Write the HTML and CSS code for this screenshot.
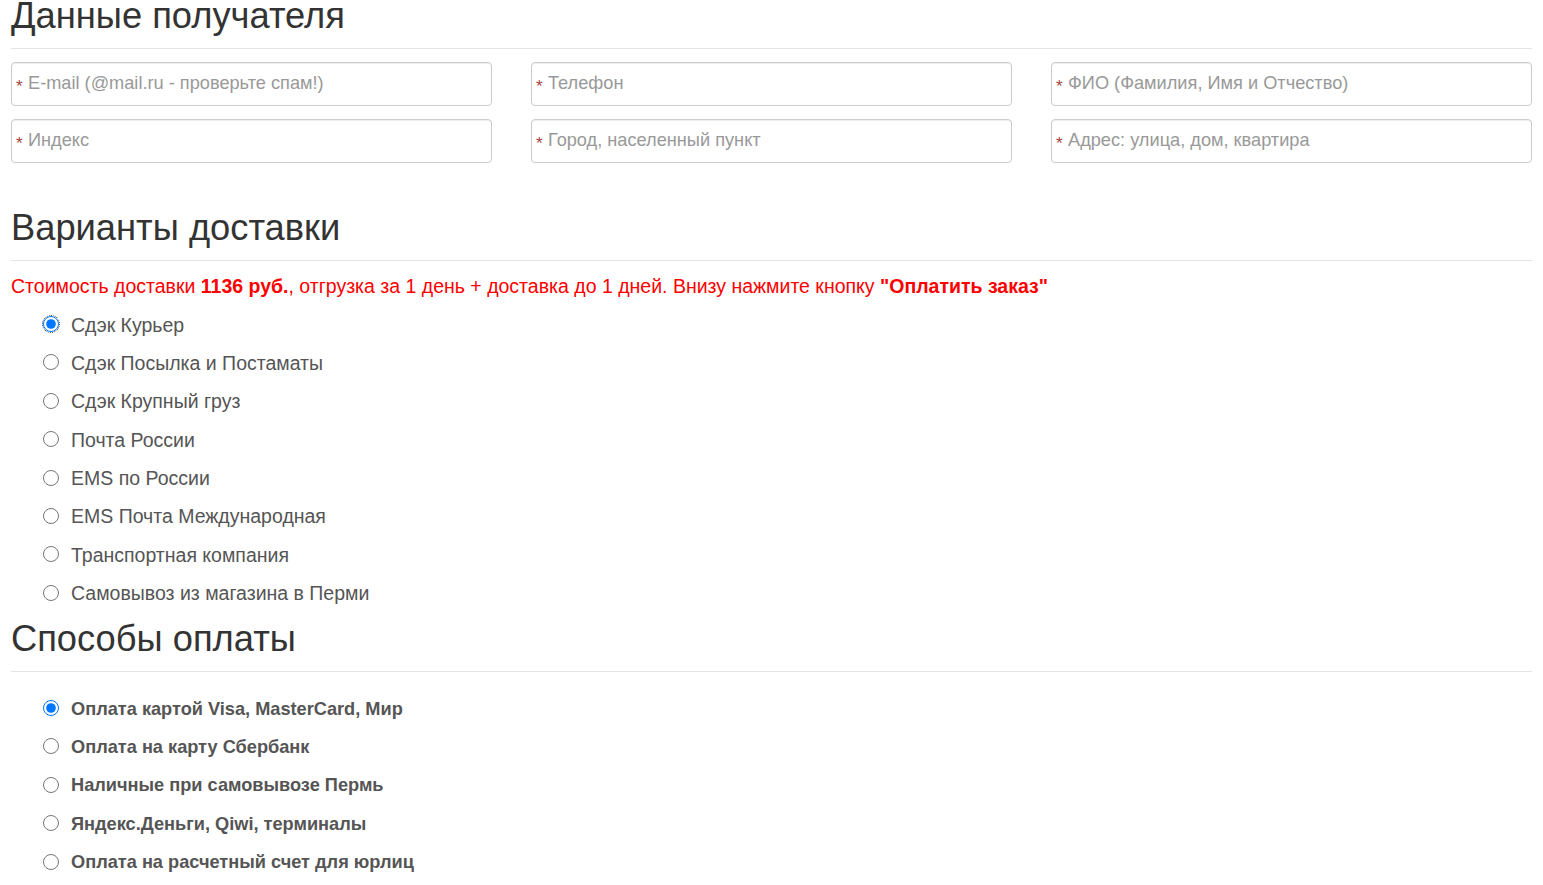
FILE: index.html
```html
<!DOCTYPE html>
<html lang="ru">
<head>
  <meta charset="UTF-8">
  <title>Оформление заказа</title>
  <link rel="stylesheet" href="styles.css">
</head>
<body>
<div class="container">
  <div class="page-header first">
    <h1>Данные получателя</h1>
  </div>
  <div class="fields">
    <div class="field"><span class="req">*</span><input type="text" placeholder="E-mail (@mail.ru - проверьте спам!)"></div>
    <div class="field"><span class="req">*</span><input type="text" placeholder="Телефон"></div>
    <div class="field"><span class="req">*</span><input type="text" placeholder="ФИО (Фамилия, Имя и Отчество)"></div>
    <div class="field"><span class="req">*</span><input type="text" placeholder="Индекс"></div>
    <div class="field"><span class="req">*</span><input type="text" placeholder="Город, населенный пункт"></div>
    <div class="field"><span class="req">*</span><input type="text" placeholder="Адрес: улица, дом, квартира"></div>
  </div>

  <div class="page-header delivery">
    <h1>Варианты доставки</h1>
  </div>
  <p class="notice">Стоимость доставки <b>1136 руб.</b>, отгрузка за 1 день + доставка до 1 дней. Внизу нажмите кнопку <b>"Оплатить заказ"</b></p>
  <div class="options">
    <label class="option"><span class="ring"><input type="radio" name="delivery" checked></span> Сдэк Курьер</label>
    <label class="option"><input type="radio" name="delivery"> Сдэк Посылка и Постаматы</label>
    <label class="option"><input type="radio" name="delivery"> Сдэк Крупный груз</label>
    <label class="option"><input type="radio" name="delivery"> Почта России</label>
    <label class="option"><input type="radio" name="delivery"> EMS по России</label>
    <label class="option"><input type="radio" name="delivery"> EMS Почта Международная</label>
    <label class="option"><input type="radio" name="delivery"> Транспортная компания</label>
    <label class="option"><input type="radio" name="delivery"> Самовывоз из магазина в Перми</label>
  </div>

  <div class="page-header payment">
    <h1>Способы оплаты</h1>
  </div>
  <div class="options bold">
    <label class="option"><input type="radio" name="pay" checked> Оплата картой Visa, MasterCard, Мир</label>
    <label class="option"><input type="radio" name="pay"> Оплата на карту Сбербанк</label>
    <label class="option"><input type="radio" name="pay"> Наличные при самовывозе Пермь</label>
    <label class="option"><input type="radio" name="pay"> Яндекс.Деньги, Qiwi, терминалы</label>
    <label class="option"><input type="radio" name="pay"> Оплата на расчетный счет для юрлиц</label>
  </div>
</div>
</body>
</html>
```

FILE: styles.css
```css
* {
  box-sizing: border-box;
}

body {
  margin: 0;
  font-family: "Liberation Sans", Arial, sans-serif;
  font-size: 18px;
  color: #555;
  background: #fff;
  overflow: hidden;
}

.container {
  padding: 0 11px;
}

.page-header {
  border-bottom: 1px solid #e5e5e5;
  padding-bottom: 12px;
}

.page-header h1 {
  margin: 0;
  font-size: 36.3px;
  font-weight: 500;
  line-height: 1.1;
  color: #333;
}

.page-header.first {
  margin-top: -4px;
  margin-bottom: 13px;
}

.page-header.delivery {
  margin-top: 45px;
  margin-bottom: 12px;
}

.page-header.payment {
  margin-top: 6px;
  margin-bottom: 18px;
}

.fields {
  display: grid;
  grid-template-columns: repeat(3, 1fr);
  column-gap: 39px;
  row-gap: 13px;
}

.field {
  position: relative;
}

.field input {
  width: 100%;
  height: 44px;
  padding: 0 16px;
  font-family: inherit;
  font-size: 18.2px;
  color: #555;
  border: 1px solid #ccc;
  border-radius: 4px;
  box-shadow: inset 0 1px 1px rgba(0,0,0,0.075);
}

.field input::placeholder {
  color: #999;
}

.req {
  position: absolute;
  left: 5px;
  top: 16px;
  font-size: 17px;
  line-height: 1;
  color: #a94442;
}

.notice {
  margin: 0;
  font-size: 19.5px;
  color: #f00;
  line-height: 26px;
}

.options {
  margin-top: 7px;
  padding-left: 32px;
  font-size: 19.5px;
}

.option {
  display: flex;
  align-items: center;
  gap: 12px;
  height: 38.4px;
}

.option input {
  margin: 0 0 2px;
  width: 16px;
  height: 16px;
}

.ring {
  display: inline-flex;
  margin: -1px;
  margin-bottom: 1px;
  border: 1px dotted #333;
  border-radius: 50%;
}

.ring input {
  margin: 0;
}

.options.bold {
  margin-top: 0;
  font-size: 18.2px;
}

.options.bold .option {
  font-weight: bold;
}
```
